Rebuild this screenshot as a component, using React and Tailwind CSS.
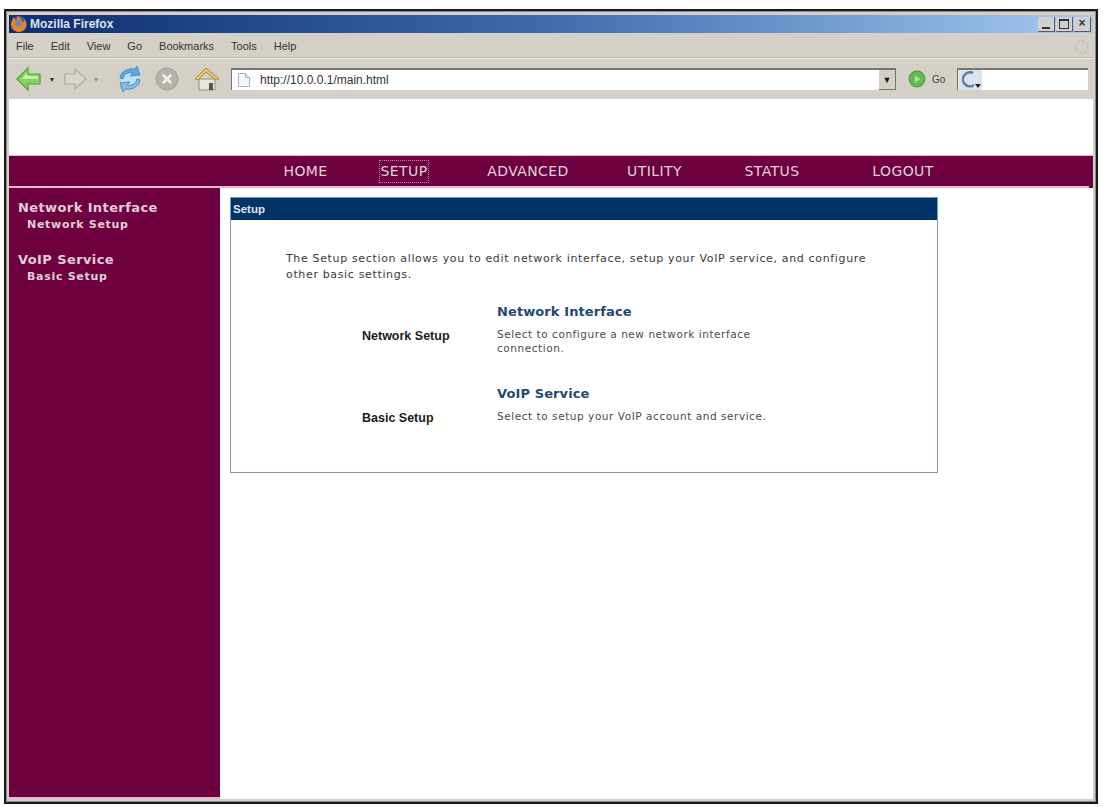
const MENU = ["File", "Edit", "View", "Go", "Bookmarks", "Tools", "Help"];

const NAV = [
  { label: "HOME", cls: "w-[45px] mr-[52px]" },
  { label: "SETUP", cls: "w-[48px] mr-[57px] outline outline-1 outline-dotted outline-[#b98aa5]" },
  { label: "ADVANCED", cls: "w-[86px] mr-[54px]" },
  { label: "UTILITY", cls: "w-[59px] mr-[60px]" },
  { label: "STATUS", cls: "w-[56px] mr-[72px]" },
  { label: "LOGOUT", cls: "w-[62px]" },
];

const FirefoxLogo = () => (
  <svg width="20" height="18" viewBox="0 0 17 17">
    <circle cx="8.5" cy="8.5" r="7.5" fill="#3a5ea8" />
    <path d="M3 2c-1 3-2 5-2 7 0 4 3 7 7.500 7 4 0 7-3 7-7 0-2-1-4-2-5 0 2-1 3-2 3 0-3-2-5-5-6 1 2 0 3-1 4-1-1-2-2-2.500-3z" fill="#e8832a" />
    <circle cx="8" cy="8" r="3" fill="#6b86c4" />
  </svg>
);

const BackArrow = () => (
  <svg width="26" height="26" viewBox="0 0 26 26">
    <path d="M1 13 12 2v6h12v10H12v6z" fill="#7fd65a" stroke="#5e9c49" strokeWidth="1.200" />
    <path d="M5 13 11 7v3h11v3z" fill="#c8f0a8" />
  </svg>
);

const ForwardArrow = () => (
  <svg width="24" height="24" viewBox="0 0 24 24">
    <path d="M23 12 12 2v5H2v10h10v5z" fill="#d8d6d0" stroke="#a9a6a0" strokeWidth="1.200" />
  </svg>
);

const Reload = () => (
  <svg width="26" height="28" viewBox="0 0 26 28">
    <circle cx="13" cy="14" r="9" fill="#bfe0f5" />
    <path d="M3 13C4 6 11 3 18 4l2-3 3 9-10 1 3-3c-5-1-9 1-10 6z" fill="#5aa9e0" stroke="#3a82bd" strokeWidth="0.800" />
    <path d="M23 15c-1 7-8 10-15 9l-2 3-3-9 10-1-3 3c5 1 9-1 10-6z" fill="#79c0ec" stroke="#3a82bd" strokeWidth="0.800" />
  </svg>
);

const Stop = () => (
  <svg width="24" height="24" viewBox="0 0 24 24">
    <circle cx="12" cy="12" r="11" fill="#b3b1ac" stroke="#a09e99" />
    <path d="M8.500 8.500l7 7M15.500 8.500l-7 7" stroke="#eeeeea" strokeWidth="2.800" strokeLinecap="round" />
  </svg>
);

const HomeIcon = () => (
  <svg width="26" height="26" viewBox="0 0 26 26">
    <path d="M5 13h16v11H5z" fill="#e6e4de" stroke="#8f8d88" />
    <path d="M1 13 12 2l13 11-3 1-10-8-8 8z" fill="#e8c85a" stroke="#a68f3a" />
    <path d="M15 17h4v7h-4z" fill="#55534e" />
  </svg>
);

const PageIcon = () => (
  <svg width="14" height="16" viewBox="0 0 14 16">
    <path d="M1.500 1.500h7l4 4v9h-11z" fill="#f4f6fb" stroke="#a9b3c6" />
    <path d="M8.500 1.500v4h4" fill="#d7deea" stroke="#a9b3c6" />
  </svg>
);

const GoIcon = () => (
  <svg width="18" height="18" viewBox="0 0 16 16">
    <circle cx="8" cy="8" r="7" fill="#62bb4e" stroke="#4c9a3c" />
    <path d="M6 4.500 11 8l-5 3.500z" fill="#a8e494" />
  </svg>
);

const Throbber = () => (
  <svg width="16" height="16" viewBox="0 0 16 16">
    <circle cx="8" cy="8" r="6" fill="none" stroke="#c6c3bb" strokeWidth="2" strokeDasharray="3 1.500" />
  </svg>
);

const SearchEngine = () => (
  <svg width="24" height="20" viewBox="0 0 24 20">
    <rect width="24" height="20" fill="#dbe3ee" />
    <path d="M15 3a7 7 0 1 0 1 12" fill="none" stroke="#5d7ea6" strokeWidth="2.500" />
    <path d="M17 14h6l-3 4z" fill="#222" />
  </svg>
);

const WinButton = ({ children }) => (
  <div className="flex h-[15px] w-[17px] items-end justify-center border-r border-b border-[#5c5c5c] bg-[#cfd0d2] pb-[1px]">
    {children}
  </div>
);

const Sidebar = () => (
  <aside className="w-[211px] shrink-0 bg-[#6e0040] pl-[9px] pt-[11px] font-['DejaVu_Sans',sans-serif] font-bold text-[#e0cfd9]">
    <p className="text-[13px] leading-[17px] tracking-[0.4px] whitespace-nowrap">Network Interface</p>
    <p className="pl-[9px] text-[11px] leading-[18px] tracking-[0.7px] whitespace-nowrap">Network Setup</p>
    <p className="mt-[17px] text-[13px] leading-[17px] tracking-[0.4px] whitespace-nowrap">VoIP Service</p>
    <p className="pl-[9px] text-[11px] leading-[18px] tracking-[0.7px] whitespace-nowrap">Basic Setup</p>
  </aside>
);

const SetupRow = ({ title, label, children }) => (
  <div className="flex">
    <div className="flex w-[211px] shrink-0 justify-start pl-[76px] pt-[25px]">
      <span className="font-['Liberation_Sans',sans-serif] text-[12.500px] font-bold leading-[14px] text-[#1c1c1c] whitespace-nowrap">{label}</span>
    </div>
    <div>
      <h2 className="font-['DejaVu_Sans',sans-serif] text-[13px] font-bold leading-[16px] tracking-[0.1px] text-[#1f4a70] whitespace-nowrap">{title}</h2>
      <p className="mt-[7px] w-[285px] font-['DejaVu_Sans',sans-serif] text-[10.500px] leading-[14px] tracking-[0.55px] text-[#4a4a4a]">{children}</p>
    </div>
  </div>
);

const App = () => {
  return (
    <div className="h-[807px] w-[1103px] overflow-hidden bg-white pt-[9px] pb-[3px] pl-[4px] pr-[5px]">
      <div className="flex h-full flex-col border-[2px] border-[#1a1a1a] bg-[#d4d0c8] px-[3px] pt-[4px] pb-[3px] shadow-[inset_0_0_0_1px_#8a8a8a]">
        {/* title bar */}
        <div className="flex h-[18px] shrink-0 items-center justify-between bg-gradient-to-r from-[#0f2c70] via-[#3f6cae] to-[#a6caf0] pr-[2px]">
          <div className="flex items-center">
            <FirefoxLogo />
            <span className="ml-[1px] font-['Liberation_Sans',sans-serif] text-[12px] font-bold text-[#dfe4ee] whitespace-nowrap">Mozilla Firefox</span>
          </div>
          <div className="flex gap-[1px]">
            <WinButton><span className="mb-[1px] h-[2px] w-[8px] bg-[#333]" /></WinButton>
            <WinButton><span className="mb-[1px] h-[10px] w-[10px] border border-t-[2px] border-[#333]" /></WinButton>
            <WinButton><span className="font-['Liberation_Sans',sans-serif] text-[12px] font-bold leading-[13px] text-[#333]">×</span></WinButton>
          </div>
        </div>

        {/* menu bar */}
        <div className="flex h-[25px] shrink-0 items-center justify-between border-b border-[#b5b2aa] pl-[7px] pr-[3px] pt-[3px]">
          <div className="flex font-['Liberation_Sans',sans-serif] text-[11px] text-[#333]">
            {MENU.map((item) => (
              <span key={item} className="mr-[17px]">{item}</span>
            ))}
          </div>
          <Throbber />
        </div>

        {/* toolbar */}
        <div className="flex h-[41px] shrink-0 items-center border-t border-[#f2f0ea] pl-[7px] pr-[5px]">
          <BackArrow />
          <span className="ml-[8px] mr-[9px] text-[8px] text-[#333]">▾</span>
          <ForwardArrow />
          <span className="ml-[7px] mr-[19px] text-[8px] text-[#8a8a8a]">▾</span>
          <Reload />
          <div className="ml-[12px]"><Stop /></div>
          <div className="ml-[15px]"><HomeIcon /></div>
          <div className="ml-[11px] flex h-[22px] w-[665px] items-center justify-between border-t-2 border-l border-[#77756f] bg-white pl-[5px]">
            <div className="flex items-center gap-[9px]">
              <PageIcon />
              <span className="font-['Liberation_Sans',sans-serif] text-[12px] text-[#333] whitespace-nowrap">http://10.0.0.1/main.html</span>
            </div>
            <div className="flex h-[20px] w-[17px] items-center justify-center border-r border-b border-[#77756f] bg-[#d4d0c8] text-[9px] text-[#111]">▼</div>
          </div>
          <div className="ml-[12px]"><GoIcon /></div>
          <span className="ml-[6px] font-['Liberation_Sans',sans-serif] text-[10px] text-[#444]">Go</span>
          <div className="ml-[12px] flex h-[22px] flex-1 items-center border-t-2 border-l border-[#77756f] bg-white">
            <SearchEngine />
          </div>
        </div>

        {/* page */}
        <div className="flex min-h-0 flex-1 flex-col bg-white">
          <div className="h-[56px] shrink-0" />
          <nav className="flex h-[31px] shrink-0 items-center border-t border-[#e9b6d4] bg-[#6e0040] pl-[274px] font-['DejaVu_Sans',sans-serif] text-[14px] tracking-[0.4px] text-[#e0d3dc]">
            {NAV.map((item) => (
              <span key={item.label} className={`${item.cls} whitespace-nowrap text-center`}>{item.label}</span>
            ))}
          </nav>
          <div className="h-[2px] shrink-0 bg-[#6e0040]">
            <div className="h-[2px] w-[1080px] bg-[#e9b6d4]" />
          </div>
          <div className="flex min-h-0 flex-1">
            <Sidebar />
            <main className="flex-1 pl-[10px] pt-[9px]">
              <section className="flex h-[276px] w-[708px] flex-col border border-[#7d94b4]">
                <header className="h-[22px] bg-[#003468] pl-[2px] font-['Liberation_Sans',sans-serif] text-[11.500px] font-bold leading-[22px] text-[#dfe8f2]">Setup</header>
                <div className="pl-[55px] pt-[31px]">
                  <p className="w-[590px] font-['DejaVu_Sans',sans-serif] text-[11px] leading-[16px] tracking-[0.65px] text-[#3a3a3a]">
                    The Setup section allows you to edit network interface, setup your VoIP service, and configure other basic settings.
                  </p>
                  <div className="mt-[21px] flex flex-col gap-[31px]">
                    <SetupRow title="Network Interface" label="Network Setup">
                      Select to configure a new network interface connection.
                    </SetupRow>
                    <SetupRow title="VoIP Service" label="Basic Setup">
                      Select to setup your VoIP account and service.
                    </SetupRow>
                  </div>
                </div>
              </section>
            </main>
          </div>
          <div className="h-[2px] w-[211px] shrink-0 bg-[#e9b6d4]" />
        </div>
      </div>
    </div>
  );
};

export default App;
